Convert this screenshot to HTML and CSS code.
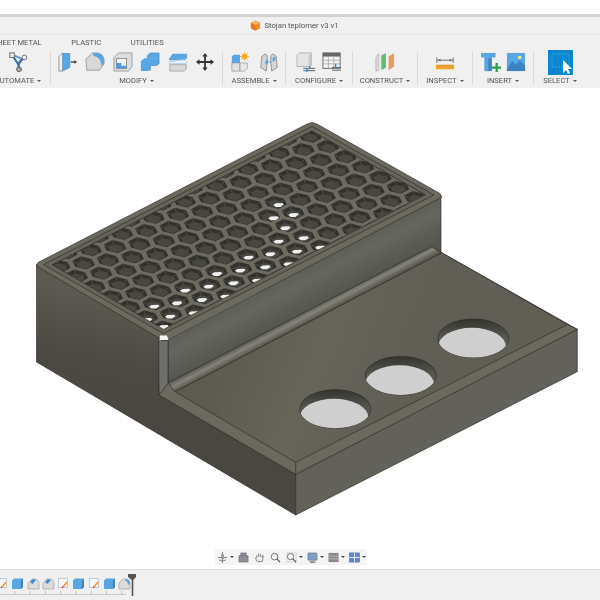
FILE: index.html
```html
<!DOCTYPE html>
<html lang="cs">
<head>
<meta charset="utf-8">
<title>Stojan teplomer v3 v1</title>
<link rel="stylesheet" href="styles.css">
</head>
<body>
<div class="page">
  <div class="topgap"></div>
  <header class="chrome">
    <div class="titlebar">
      <svg class="doc" viewBox="0 0 12 12"><path d="M6 .5 11 3v6l-5 2.6L1 9V3z" fill="#f08a24"/><path d="M6 .5 11 3 6 5.6 1 3z" fill="#f9b46a"/><path d="M6 5.6V11.6L1 9V3z" fill="#e8781a"/></svg>
      <span>Stojan teplomer v3 v1</span>
    </div>
    <nav class="tabs"><span>SHEET METAL</span><span>PLASTIC</span><span>UTILITIES</span></nav>
    <div class="tools">
      <section class="group first">
        <div class="icons">
          <svg class="ic" viewBox="0 0 22 22"><path d="M5 3 16 8 13 10 12 16 15 20" fill="none" stroke="#4f97d6" stroke-width="2"/><path d="M5 4 11 13 17 7M11 13 12 18" fill="none" stroke="#3f6f9f" stroke-width="2.2"/><rect x="2" y="1" width="5" height="5" fill="#eee" stroke="#666"/><circle cx="18" cy="6" r="2.6" fill="#eee" stroke="#666"/><circle cx="12" cy="19" r="2.6" fill="#aaa" stroke="#555"/></svg>
        </div>
        <div class="label">AUTOMATE</div>
      </section>
      <section class="group modify">
        <div class="icons">
          <svg class="ic" viewBox="0 0 22 22"><path d="M1 5 5 1V21L1 21z" fill="#eee" stroke="#777" stroke-width=".8"/><path d="M5 1 13 1V17L5 21z" fill="#58a6e4"/><path d="M13 1V17L5 21" fill="none" stroke="#3a7fba" stroke-width=".6"/><path d="M14 11H19" stroke="#333" stroke-width="1.4"/><path d="M18 9 21 11 18 13z" fill="#333"/></svg>
          <svg class="ic" viewBox="0 0 22 22"><path d="M1 8 8 1H13A8 8 0 0 1 21 9V13L16 20H2z" fill="#d8d8d8" stroke="#888" stroke-width=".8"/><path d="M9 1H13A8 8 0 0 1 21 9V13L18 15C18 9 15 5 9 4z" fill="#58a6e4"/></svg>
          <svg class="ic" viewBox="0 0 22 22"><path d="M1 6 6 1H21V16L17 21H1z" fill="#dcdcdc" stroke="#888" stroke-width=".8"/><rect x="4" y="7" width="11" height="11" fill="#f3f3f3" stroke="#777" stroke-width=".8"/><path d="M4 12H9V15H15V18H4z" fill="#4d9be0"/></svg>
          <svg class="ic" viewBox="0 0 22 22"><path d="M1 10 5 7H12V20L9 21H1z" fill="#58a6e4"/><path d="M8 4 11 1H21V13L18 15H8z" fill="#58a6e4"/><path d="M8 7V4L11 1H21V13L18 15H12" fill="none" stroke="#4288c4" stroke-width=".6"/><path d="M12 7H18V4" fill="none" stroke="#7ab9ea" stroke-width=".6"/></svg>
          <svg class="ic" viewBox="0 0 22 22"><path d="M2 14H20V19L18 21H2z" fill="#d8d8d8" stroke="#888" stroke-width=".7"/><path d="M1 8 5 2H21V6L19 9H1z" fill="#58a6e4"/><path d="M1 11 21 7M1 13H19L21 10" stroke="#8cc4ee" stroke-width=".9" fill="none"/></svg>
          <svg class="ic" viewBox="0 0 22 22"><path d="M11 1 14 5H12V10H17V8L21 11 17 14V12H12V17H14L11 21 8 17H10V12H5V14L1 11 5 8V10H10V5H8z" fill="#333"/></svg>
        </div>
        <div class="label">MODIFY</div>
      </section>
      <section class="group assemble">
        <div class="icons">
          <svg class="ic" viewBox="0 0 22 22"><path d="M2 5 4 3H11V12H2z" fill="#58a6e4"/><path d="M2 12H11V21H2z" fill="#e2e2e2" stroke="#888" stroke-width=".7"/><path d="M11 12H19V18L16 21H11z" fill="#e8e8e8" stroke="#888" stroke-width=".7"/><circle cx="16" cy="5" r="3" fill="#f4a92c"/><path d="M16 0V10M11 5H21M12.5 1.500 19.500 8.500M19.500 1.500 12.500 8.500" stroke="#f4a92c" stroke-width="1"/></svg>
          <svg class="ic" viewBox="0 0 22 22"><path d="M3 5 7 2 9 4V12L8 21 2 17z" fill="#d6d6d6" stroke="#777" stroke-width=".8"/><path d="M19 5 15 2 13 4V12L14 21 20 17z" fill="#d6d6d6" stroke="#777" stroke-width=".8"/><path d="M7 10 10 8V12L7 14zM15 6 18 5V9L15 11z" fill="#58a6e4"/><path d="M9 11H14" stroke="#58a6e4"/></svg>
        </div>
        <div class="label">ASSEMBLE</div>
      </section>
      <section class="group configure">
        <div class="icons">
          <svg class="ic" viewBox="0 0 22 22"><path d="M1 4 4 1H17V14L14 16H1z" fill="#e4e4e4" stroke="#999" stroke-width=".7"/><path d="M14 4V16L17 14V1z" fill="#c9c9c9"/><path d="M8 18H21M8 20.500H21" stroke="#555"/><path d="M15 15V19M12 18V22" stroke="#2d8ad8" stroke-width="1.6"/></svg>
          <svg class="ic" viewBox="0 0 22 22"><rect x="1" y="1" width="19" height="17" fill="#f2f2f2" stroke="#666"/><rect x="1" y="1" width="19" height="4" fill="#666"/><path d="M1 9H20M1 13H20M7 5V18M13 5V18" stroke="#999" stroke-width=".7"/><path d="M11 17H21M11 20H21" stroke="#555"/><path d="M15 13V18" stroke="#2d8ad8" stroke-width="1.6"/></svg>
        </div>
        <div class="label">CONFIGURE</div>
      </section>
      <section class="group construct">
        <div class="icons">
          <svg class="ic" viewBox="0 0 22 22"><path d="M1 6 4 2V20L1 21z" fill="#ddd" stroke="#888" stroke-width=".6"/><path d="M4 3 10 1V17L4 20z" fill="#e6e6e6"/><path d="M7 4 12 1V17L7 20z" fill="#5dbb74"/><path d="M15 5 21 1V16L15 20z" fill="#e79a62"/></svg>
        </div>
        <div class="label">CONSTRUCT</div>
      </section>
      <section class="group inspect">
        <div class="icons">
          <svg class="ic" viewBox="0 0 22 22"><path d="M2 9H20" stroke="#666"/><path d="M2 6V12M20 6V12" stroke="#666"/><path d="M3 9 6 7.500V10.500zM19 9 16 7.500V10.500z" fill="#666"/><rect x="1" y="14" width="20" height="5" fill="#f1a52d"/><path d="M4 14V16M7 14V16M10 14V16M13 14V16M16 14V16M19 14V16" stroke="#a86f12" stroke-width=".6"/></svg>
        </div>
        <div class="label">INSPECT</div>
      </section>
      <section class="group insert">
        <div class="icons">
          <svg class="ic" viewBox="0 0 22 22"><path d="M0 1H16V6H0z" fill="#58a6e4"/><path d="M4 6H12V21H4z" fill="#3f86c4"/><path d="M4 6H8V21H4z" fill="#5aa4de"/><path d="M12 16H16V12H18.500V16H22V18.500H18.500V22H16V18.500H12z" fill="#2fa04a"/></svg>
          <svg class="ic" viewBox="0 0 22 22"><rect x="1" y="1" width="20" height="20" fill="#58a6e4"/><path d="M1 19 7 10 11 14 15 9 21 15V21H1z" fill="#3a83c2"/><circle cx="15" cy="6" r="2" fill="#f7e58f"/></svg>
        </div>
        <div class="label">INSERT</div>
      </section>
      <section class="group select">
        <div class="icons">
          <svg class="ic wide" viewBox="0 0 25 25"><rect width="25" height="25" fill="#0a86d2"/><rect x="4" y="4" width="17" height="13" fill="none" stroke="#45c8c8" stroke-dasharray="1.500 1.500" stroke-width=".8"/><path d="M15 10V23L18 20 20 24 22 23 20 19H24z" fill="#fff"/></svg>
        </div>
        <div class="label">SELECT</div>
      </section>
    </div>
  </header>

  <main class="canvas">
    <svg class="model" viewBox="0 88 600 481">
      <defs>
        <linearGradient id="wall" gradientUnits="userSpaceOnUse" x1="290" y1="265" x2="320" y2="322">
          <stop offset="0" stop-color="#5a5a54"/><stop offset=".35" stop-color="#656660"/><stop offset="1" stop-color="#4d4c46"/>
        </linearGradient>
        <linearGradient id="left" gradientUnits="userSpaceOnUse" x1="120" y1="300" x2="100" y2="400">
          <stop offset="0" stop-color="#5b5950"/><stop offset=".6" stop-color="#4c4a42"/><stop offset="1" stop-color="#49473f"/>
        </linearGradient>
        <linearGradient id="plate" gradientUnits="userSpaceOnUse" x1="230" y1="330" x2="400" y2="400">
          <stop offset="0" stop-color="#5d5b50"/><stop offset=".5" stop-color="#67645a"/><stop offset="1" stop-color="#605e55"/>
        </linearGradient>
        <linearGradient id="fil" gradientUnits="userSpaceOnUse" x1="298" y1="314.500" x2="303" y2="324">
          <stop offset="0" stop-color="#56564f"/><stop offset=".5" stop-color="#85847a"/><stop offset="1" stop-color="#5c5a50"/>
        </linearGradient>
        <linearGradient id="holewall" x1="0" y1="0" x2="0" y2="1">
          <stop offset="0" stop-color="#34342f"/><stop offset=".45" stop-color="#55554e"/><stop offset="1" stop-color="#6c6c66"/>
        </linearGradient>
        <clipPath id="gridclip"><polygon points="52.300,264.800 311.800,131 425.200,194.700 163.600,329"/></clipPath>
        <clipPath id="h1"><ellipse cx="335.300" cy="409" rx="35.500" ry="19.300"/></clipPath>
        <clipPath id="h2"><ellipse cx="400.700" cy="375.700" rx="35.500" ry="19.300"/></clipPath>
        <clipPath id="h3"><ellipse cx="473.300" cy="338.300" rx="35.500" ry="19.300"/></clipPath>
        <g id="hex">
          <polygon points="10.900,1.870 2.750,6.080 -8.160,3.430 -10.900,-1.870 -2.750,-6.080 8.160,-3.430" fill="#33322d" stroke="#232220" stroke-width=".5"/>
          <polygon points="7.900,2.900 2.200,5.860 -5.400,4 -7.300,.3 -1.600,-2.660 6,-.8" fill="#484741"/>
          <path d="M-10.900-1.870-7.300.3M-2.750-6.080-1.600-2.660M8.160-3.430 6-.8" stroke="#65645b" stroke-width=".5" fill="none"/>
        </g>
        <g id="row">
          <use href="#hex" transform="translate(-140.240,-81.600)"/>
          <use href="#hex" transform="translate(-122.710,-71.400)"/>
          <use href="#hex" transform="translate(-105.180,-61.200)"/>
          <use href="#hex" transform="translate(-87.650,-51)"/>
          <use href="#hex" transform="translate(-70.120,-40.800)"/>
          <use href="#hex" transform="translate(-52.590,-30.600)"/>
          <use href="#hex" transform="translate(-35.060,-20.400)"/>
          <use href="#hex" transform="translate(-17.530,-10.200)"/>
          <use href="#hex"/>
          <use href="#hex" transform="translate(17.530,10.200)"/>
          <use href="#hex" transform="translate(35.060,20.400)"/>
          <use href="#hex" transform="translate(52.590,30.600)"/>
          <use href="#hex" transform="translate(70.120,40.800)"/>
          <use href="#hex" transform="translate(87.650,51)"/>
          <use href="#hex" transform="translate(105.180,61.200)"/>
          <use href="#hex" transform="translate(122.710,71.400)"/>
          <use href="#hex" transform="translate(140.240,81.600)"/>
        </g>
        <polygon id="spot" points="-5,0 -2.500,-1.700 4.300,-2 5.500,-.4 2.100,1.900 -2.500,1.900" fill="#f0f0f0"/>
      </defs>

      <polygon points="36.500,264.500 160,336 159,395 295.700,474.300 295.700,515 36.500,362" fill="url(#left)" stroke="#26251f" stroke-width=".6"/>
      <polygon points="295.700,474.300 577.300,329.300 577.300,371.700 295.700,515" fill="#62625b" stroke="#26251f" stroke-width=".6"/>
      <polygon points="159,395 168,383 431.700,246.700 441.700,252.700 577.300,329.300 295.700,474.300" fill="#6b685d" stroke="#26251f" stroke-width=".6"/>
      <polygon points="175,391.700 441.700,252.700 567.300,324.500 295.700,462.300" fill="url(#plate)" stroke="#26251f" stroke-width=".6"/>
      <path d="M295.700 462.300V474.300M567.300 324.500 577.300 329.300" stroke="#26251f" stroke-width=".6"/>
      <polygon points="168,340 441,197 441,252.700 175,391.700 168,383" fill="url(#wall)"/>
      <polygon points="168.300,382.700 431.700,246.700 441.700,252.700 175,391.700" fill="url(#fil)" stroke="#26251f" stroke-width=".6"/>
      <path d="M168 340V383 M441 197V252.700" stroke="#26251f" stroke-width=".6"/>
      <polygon points="158.800,338 168,340 168,383 159,395" fill="#6f706b" stroke="#26251f" stroke-width=".6"/>

      <g stroke="#26251f" stroke-width=".6">
        <ellipse cx="335.300" cy="409" rx="35.500" ry="19.300" fill="url(#holewall)"/>
        <ellipse cx="400.700" cy="375.700" rx="35.500" ry="19.300" fill="url(#holewall)"/>
        <ellipse cx="473.300" cy="338.300" rx="35.500" ry="19.300" fill="url(#holewall)"/>
      </g>
      <ellipse clip-path="url(#h1)" cx="334" cy="418" rx="34.500" ry="19.300" fill="#cfcfcf"/>
      <ellipse clip-path="url(#h2)" cx="399.500" cy="384.500" rx="34.500" ry="19.300" fill="#cfcfcf"/>
      <ellipse clip-path="url(#h3)" cx="472" cy="347" rx="34" ry="19.300" fill="#cfcfcf"/>

      <polygon points="38,262.500 307,124 312,122.500 317,124 440,193.500 442,197 168,340 163,341 158.800,338 36.500,266" fill="#6c695e" stroke="#26251f" stroke-width=".6"/>
      <polygon points="43.500,264.600 312,126.300 434,194.900 163.600,333.700" fill="#65635a" stroke="#26251f" stroke-width=".6"/>
      <polygon points="52.300,264.800 311.800,131 425.200,194.700 163.600,329" fill="#6d6a5f" stroke="#26251f" stroke-width=".7"/>
      <g clip-path="url(#gridclip)">
        <g transform="translate(115,246.700)">
          <use href="#row" transform="translate(-97.840,12)"/>
          <use href="#row" transform="translate(-73.380,9)"/>
          <use href="#row" transform="translate(-48.920,6)"/>
          <use href="#row" transform="translate(-24.460,3)"/>
          <use href="#row"/>
          <use href="#row" transform="translate(24.460,-3)"/>
          <use href="#row" transform="translate(48.920,-6)"/>
          <use href="#row" transform="translate(73.380,-9)"/>
          <use href="#row" transform="translate(97.840,-12)"/>
          <use href="#row" transform="translate(122.300,-15)"/>
          <use href="#row" transform="translate(146.760,-18)"/>
          <use href="#row" transform="translate(171.220,-21)"/>
          <use href="#row" transform="translate(195.680,-24)"/>
          <use href="#row" transform="translate(220.140,-27)"/>
          <use href="#row" transform="translate(244.600,-30)"/>
          <use href="#row" transform="translate(269.060,-33)"/>
          <use href="#row" transform="translate(293.520,-36)"/>
          <use href="#row" transform="translate(317.980,-39)"/>
          <use href="#row" transform="translate(342.440,-42)"/>
        </g>
        <use href="#spot" x="146.700" y="320"/><use href="#spot" x="170" y="316.700"/><use href="#spot" x="193.300" y="313.300"/>
        <use href="#spot" x="154" y="306.700"/><use href="#spot" x="176.700" y="303.300"/><use href="#spot" x="201.700" y="300"/><use href="#spot" x="225" y="296.700"/>
        <use href="#spot" x="185" y="290.700"/><use href="#spot" x="208.300" y="286.700"/><use href="#spot" x="233.300" y="283.300"/><use href="#spot" x="256.700" y="280.700"/>
        <use href="#spot" x="216.700" y="274"/><use href="#spot" x="240" y="270.700"/><use href="#spot" x="265" y="267.300"/><use href="#spot" x="288.300" y="264.300"/>
        <use href="#spot" x="248.300" y="257.700"/><use href="#spot" x="270" y="254.300"/><use href="#spot" x="296.700" y="251.700"/><use href="#spot" x="320" y="247.700"/>
        <use href="#spot" x="278.300" y="241.700"/><use href="#spot" x="303.300" y="238.300"/>
        <use href="#spot" x="285" y="228.300"/><use href="#spot" x="293.300" y="215"/><use href="#spot" x="278.300" y="205"/><use href="#spot" x="273.300" y="218.300"/>
        <use href="#spot" x="163.300" y="327"/>
      </g>
      <polygon points="160,335.500 167,335.500 168.500,340 159.500,340" fill="#f4f4f4"/>
    </svg>

    <div class="navbar">
      <svg class="nv" viewBox="0 0 12 12"><path d="M6 0V12M1 6H11M2 8.500 6 10 10 8.500" fill="none" stroke="#777" stroke-width="1"/><path d="M4.500 3 6 .5 7.500 3V8H4.500z" fill="#999"/></svg><i class="caret"></i>
      <svg class="nv after" viewBox="0 0 12 12"><path d="M1 4H11V11H1zM3 4V1H9V4" fill="#8b8f96" stroke="#666" stroke-width=".6"/></svg>
      <svg class="nv gap" viewBox="0 0 12 12"><path d="M3 6V3.500M5 5.500V1.500M7 5.500V2M9 6V3.500M3 6 1.500 6.500 3.500 10.500H9L10 6V3.500" fill="#eee" stroke="#777" stroke-width=".9"/></svg>
      <svg class="nv gap" viewBox="0 0 12 12"><circle cx="5" cy="5" r="3.600" fill="#f4f8fb" stroke="#666"/><path d="M7.500 7.500 11 11" stroke="#555" stroke-width="1.400"/></svg>
      <svg class="nv gap" viewBox="0 0 12 12"><path d="M1 1H11V11H1z" fill="none" stroke="#999" stroke-dasharray="1 1" stroke-width=".7"/><circle cx="5" cy="5" r="3.400" fill="#f4f8fb" stroke="#666"/><path d="M7.500 7.500 11 11" stroke="#555" stroke-width="1.400"/></svg><i class="caret"></i>
      <svg class="nv after" viewBox="0 0 12 12"><rect x="1" y="1" width="10" height="8" rx="1" fill="#7f9fc9" stroke="#666" stroke-width=".6"/><path d="M3 11H9" stroke="#666" stroke-width="1.400"/></svg><i class="caret"></i>
      <svg class="nv after" viewBox="0 0 12 12"><rect x=".5" y="1" width="11" height="10" fill="#8a8a8a"/><path d="M.5 4.500H11.500M.5 7.500H11.500" stroke="#c8c8c8" stroke-width=".7"/></svg><i class="caret"></i>
      <svg class="nv after" viewBox="0 0 12 12"><rect x=".5" y="1" width="11" height="10" fill="#5f8bc0" stroke="#557" stroke-width=".5"/><path d="M6 1V11M.5 6H11.500" stroke="#e8eef5"/></svg><i class="caret"></i>
    </div>
  </main>

  <footer class="timeline">
    <svg class="sprites" width="0" height="0">
      <defs>
        <g id="t-sk"><rect x="1.500" y="1.500" width="9" height="9" fill="#f6f6f6" stroke="#6d8fb0" stroke-width=".7" stroke-dasharray="1.200 .8"/><path d="M6 10 10 5" stroke="#ef9a3c" stroke-width="1.800"/><path d="M5 11 6 9.500" stroke="#d33" stroke-width="1.200"/></g>
        <g id="t-cu"><path d="M1 3.500 3 1.500H12V10L10 12H1z" fill="#58a6e4"/><path d="M10 3.500V12L12 10V1.500z" fill="#3b80bd"/></g>
        <g id="t-fi"><path d="M1 6 5 2H8A4.500 4.500 0 0 1 12 6.500V12H1z" fill="#dcdcdc" stroke="#999" stroke-width=".6"/><path d="M3 5 6 2 9 3 5.500 7z" fill="#3b8fd8"/></g>
        <g id="t-fr"><path d="M1 6 5 2H8A4.500 4.500 0 0 1 12 6.500V12H1z" fill="#dcdcdc" stroke="#999" stroke-width=".6"/><path d="M8 2A4.500 4.500 0 0 1 12 6.500L10 8C10 5.500 9 4 7 3.500z" fill="#58a6e4"/></g>
      </defs>
    </svg>
    <div class="track">
      <div class="steps">
        <svg class="st" viewBox="0 0 13 13"><use href="#t-sk"/></svg>
        <svg class="st" viewBox="0 0 13 13"><use href="#t-cu"/></svg>
        <svg class="st" viewBox="0 0 13 13"><use href="#t-fi"/></svg>
        <svg class="st" viewBox="0 0 13 13"><use href="#t-fi"/></svg>
        <svg class="st" viewBox="0 0 13 13"><use href="#t-sk"/></svg>
        <svg class="st" viewBox="0 0 13 13"><use href="#t-cu"/></svg>
        <svg class="st" viewBox="0 0 13 13"><use href="#t-sk"/></svg>
        <svg class="st" viewBox="0 0 13 13"><use href="#t-cu"/></svg>
        <svg class="st" viewBox="0 0 13 13"><use href="#t-fr"/></svg>
      </div>
      <div class="rule"></div>
    </div>
    <svg class="playhead" viewBox="0 0 9 22"><path d="M0 0H8V3L5.300 6V22H3.700V6L0 3z" fill="#555"/></svg>
  </footer>
</div>
</body>
</html>
```
FILE: styles.css
```css
* { box-sizing: border-box; }
html, body { margin: 0; padding: 0; background: #fff; }
.page {
  width: 600px;
  height: 600px;
  overflow: hidden;
  display: flex;
  flex-direction: column;
  font-family: Roboto, "Liberation Sans", sans-serif;
  color: #555;
}
.topgap { height: 14px; background: #fff; flex: none; }
.chrome {
  flex: none;
  height: 74px;
  background: #f0f0f0;
  border-top: 3px solid #d2d2d2;
  display: flex;
  flex-direction: column;
}
.titlebar {
  height: 18px;
  display: flex;
  align-items: center;
  justify-content: center;
  gap: 3px;
  font-size: 7.7px;
  color: #555;
  border-bottom: 1px solid #e6e6e6;
  padding-right: 11px;
}
.titlebar, .tabs, .tools, .timeline, .navbar { filter: blur(.35px); }
.doc { width: 11px; height: 11px; }
.tabs {
  height: 14px;
  display: flex;
  align-items: center;
  gap: 29.5px;
  margin-left: -7.5px;
  font-size: 7.6px;
  color: #555;
}
.tools { flex: 1; display: flex; }
.group {
  display: flex;
  flex-direction: column;
  align-items: center;
  border-left: 1px solid #d9d9d9;
  height: 33px;
  margin-top: 3px;
}
.icons { display: flex; height: 22px; align-items: flex-start; margin-top: -1px; }
.ic { width: 20px; height: 22px; display: block; }
.wide { width: 25px; height: 25px; margin-top: -1px; }
.label {
  font-size: 7.6px;
  line-height: 10px;
  margin-top: 3px;
  white-space: nowrap;
  display: flex;
  align-items: center;
  gap: 3px;
}
.label::after {
  content: "";
  border-left: 2px solid transparent;
  border-right: 2px solid transparent;
  border-top: 2.5px solid #555;
}
.first { width: 50px; padding-right: 14px; border-left: 0; }
.modify { width: 172px; }
.modify .icons { gap: 7.5px; }
.assemble { width: 63px; }
.assemble .icons { gap: 9px; }
.configure { width: 67px; }
.configure .icons { gap: 6px; }
.construct { width: 65px; }
.inspect { width: 55px; }
.insert { width: 61px; }
.insert .icons { gap: 5px; }
.select { width: 67px; padding-right: 14px; }

.canvas { flex: 1; position: relative; background: #fff; min-height: 0; }
.model { display: block; width: 600px; height: 481px; filter: blur(.3px); }
.navbar {
  position: absolute;
  left: 215px;
  top: 461px;
  width: 152px;
  height: 16px;
  background: #f4f4f4;
  display: flex;
  align-items: center;
  padding-left: 1.5px;
}
.nv { width: 11px; height: 11px; flex: none; }
.gap { margin-left: 5px; }
.after { margin-left: 4px; }
.caret {
  flex: none;
  margin-left: 2px;
  border-left: 2px solid transparent;
  border-right: 2px solid transparent;
  border-top: 2.5px solid #444;
}

.timeline {
  flex: none;
  height: 31px;
  background: #f0f0f0;
  border-top: 1px solid #dcdcdc;
  display: flex;
  align-items: flex-start;
  padding-top: 7px;
}
.sprites { position: absolute; }
.track { margin-left: -4px; width: 130px; }
.steps { display: flex; gap: 2.3px; }
.st { width: 13px; height: 13px; display: block; flex: none; }
.rule {
  height: 4px;
  margin-top: 1px;
  border-bottom: 1.5px solid #c8c8c8;
  background-image: linear-gradient(90deg, #bdbdbd 1px, transparent 1px);
  background-size: 15.3px 100%;
  background-position: 3px 0;
}
.playhead { width: 9px; height: 22px; margin-left: 2px; margin-top: -3px; flex: none; }
```
